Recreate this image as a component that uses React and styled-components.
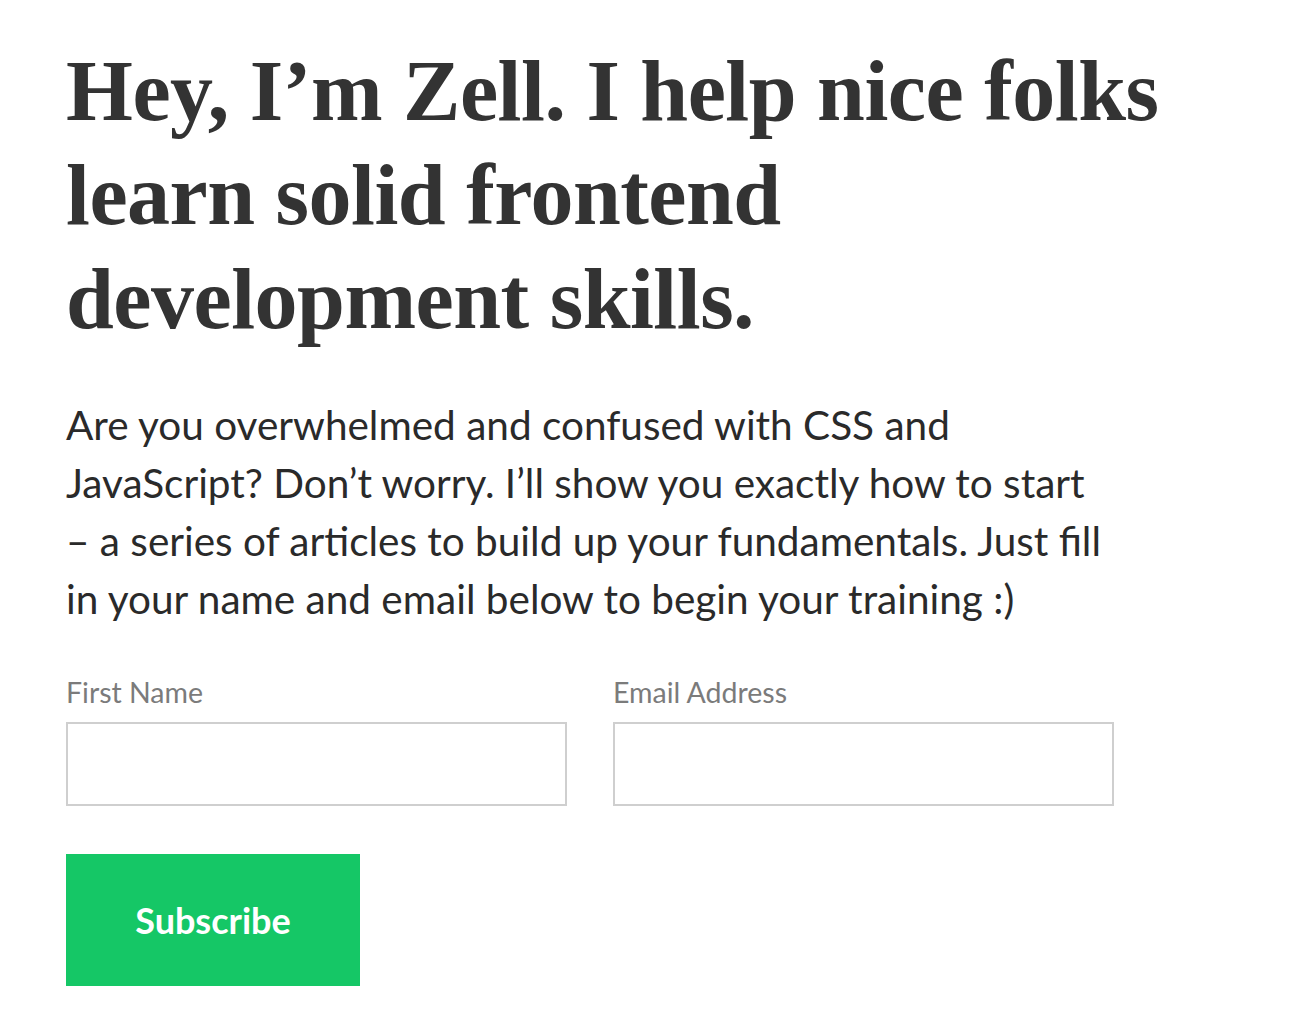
import React from "react";
import styled, { createGlobalStyle } from "styled-components";

const GlobalStyle = createGlobalStyle`
  * { box-sizing: border-box; }
  body {
    margin: 0;
    background: #fff;
    font-family: Lato, "Noto Sans", sans-serif;
    color: #333;
  }
`;

const Page = styled.main`
  padding: 39px 0 0 66px;
`;

const Wrapper = styled.div`
  width: 1100px;
`;

const Heading = styled.h1`
  margin: 0;
  font-family: "Liberation Serif", "Times New Roman", serif;
  font-weight: 700;
  font-size: 86px;
  line-height: 104px;
  letter-spacing: -0.5px;
  color: #333;
  width: 1120px;
`;

const Lead = styled.p`
  margin: 45px 0 0;
  width: 1044px;
  font-family: Lato, "Noto Sans", sans-serif;
  font-size: 40.5px;
  line-height: 58px;
  color: #2a2a2a;
`;

const Form = styled.form`
  margin-top: 48px;
`;

const Fields = styled.div`
  display: flex;
  gap: 46px;
`;

const Field = styled.label`
  display: flex;
  flex-direction: column;
  width: 501px;
`;

const LabelText = styled.span`
  font-family: Lato, "Noto Sans", sans-serif;
  font-size: 28.5px;
  line-height: 32px;
  color: #7b7b7b;
  margin-bottom: 14px;
`;

const Input = styled.input`
  height: 84px;
  width: 100%;
  border: 2px solid #cfcfcf;
  border-radius: 0;
  outline: none;
  font-size: 24px;
  padding: 0 16px;
`;

const Button = styled.button`
  margin-top: 48px;
  width: 294px;
  height: 132px;
  border: 0;
  background: #15c766;
  color: #fff;
  font-family: Lato, "Noto Sans", sans-serif;
  font-size: 36px;
  font-weight: 700;
  cursor: pointer;
`;

export default function App() {
  return (
    <>
      <GlobalStyle />
      <Page>
        <Wrapper>
          <Heading>
            Hey, I’m Zell. I help nice folks learn solid frontend development
            skills.
          </Heading>
          <Lead>
            Are you overwhelmed and confused with CSS and JavaScript? Don’t
            worry. I’ll show you exactly how to start – a series of articles to
            build up your fundamentals. Just fill in your name and email below
            to begin your training :)
          </Lead>
          <Form onSubmit={(e) => e.preventDefault()}>
            <Fields>
              <Field>
                <LabelText>First Name</LabelText>
                <Input type="text" />
              </Field>
              <Field>
                <LabelText>Email Address</LabelText>
                <Input type="email" />
              </Field>
            </Fields>
            <Button type="submit">Subscribe</Button>
          </Form>
        </Wrapper>
      </Page>
    </>
  );
}
